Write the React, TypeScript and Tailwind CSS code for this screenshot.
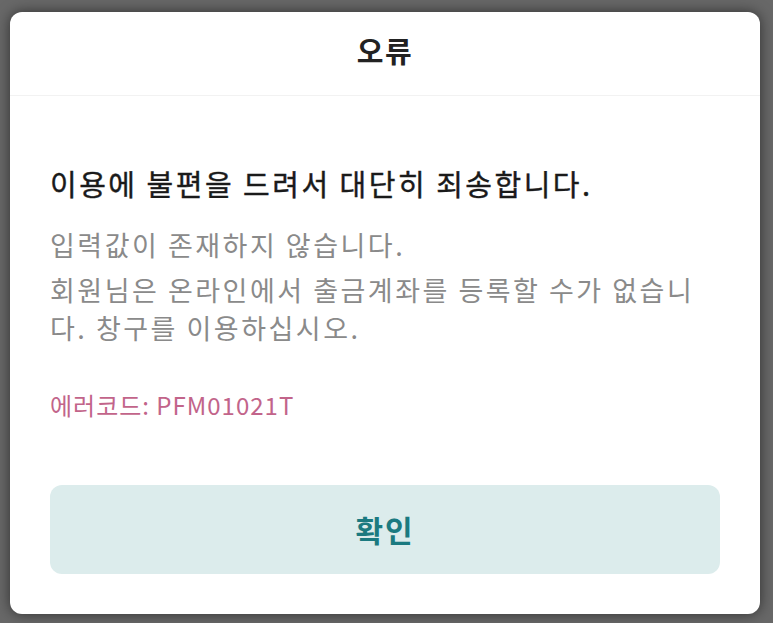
export default function App() {
  return (
    <div className="flex h-[623px] w-[773px] bg-[#686868] pl-[10px] pt-[12px] font-['Noto_Sans_CJK_KR','Noto_Sans',sans-serif]">
      <div className="flex h-[602px] w-[750px] flex-col rounded-[12px] bg-white shadow-[0_0_14px_rgba(0,0,0,0.55)]">
        <div className="flex h-[84px] items-center justify-center border-b border-[#f2f2f2] pb-[5px]">
          <h1 className="text-[29px] font-bold tracking-[1.5px] text-[#222]">오류</h1>
        </div>
        <div className="flex flex-1 flex-col px-[40px] pt-[68px]">
          <p className="text-[29px] leading-[38px] font-normal tracking-[2.5px] text-[#1a1a1a] [-webkit-text-stroke:0.4px_#1a1a1a]">
            이용에 불편을 드려서 대단히 죄송합니다.
          </p>
          <div className="mt-[24px] text-[27px] leading-[38px] tracking-[2.5px] text-[#8a8a8a]">
            <p>입력값이 존재하지 않습니다.</p>
            <p className="mt-[7px]">
              회원님은 온라인에서 출금계좌를 등록할 수가 없습니다. 창구를 이용하십시오.
            </p>
          </div>
          <p className="mt-[41px] text-[24px] leading-[34px] tracking-[1px] text-[#c2648a]">
            에러코드: PFM01021T
          </p>
          <button className="mt-auto mb-[40px] h-[89px] w-full rounded-[12px] bg-[#dcecec] text-[30px] font-bold tracking-[2px] text-[#1b7a80]">
            확인
          </button>
        </div>
      </div>
    </div>
  )
}
